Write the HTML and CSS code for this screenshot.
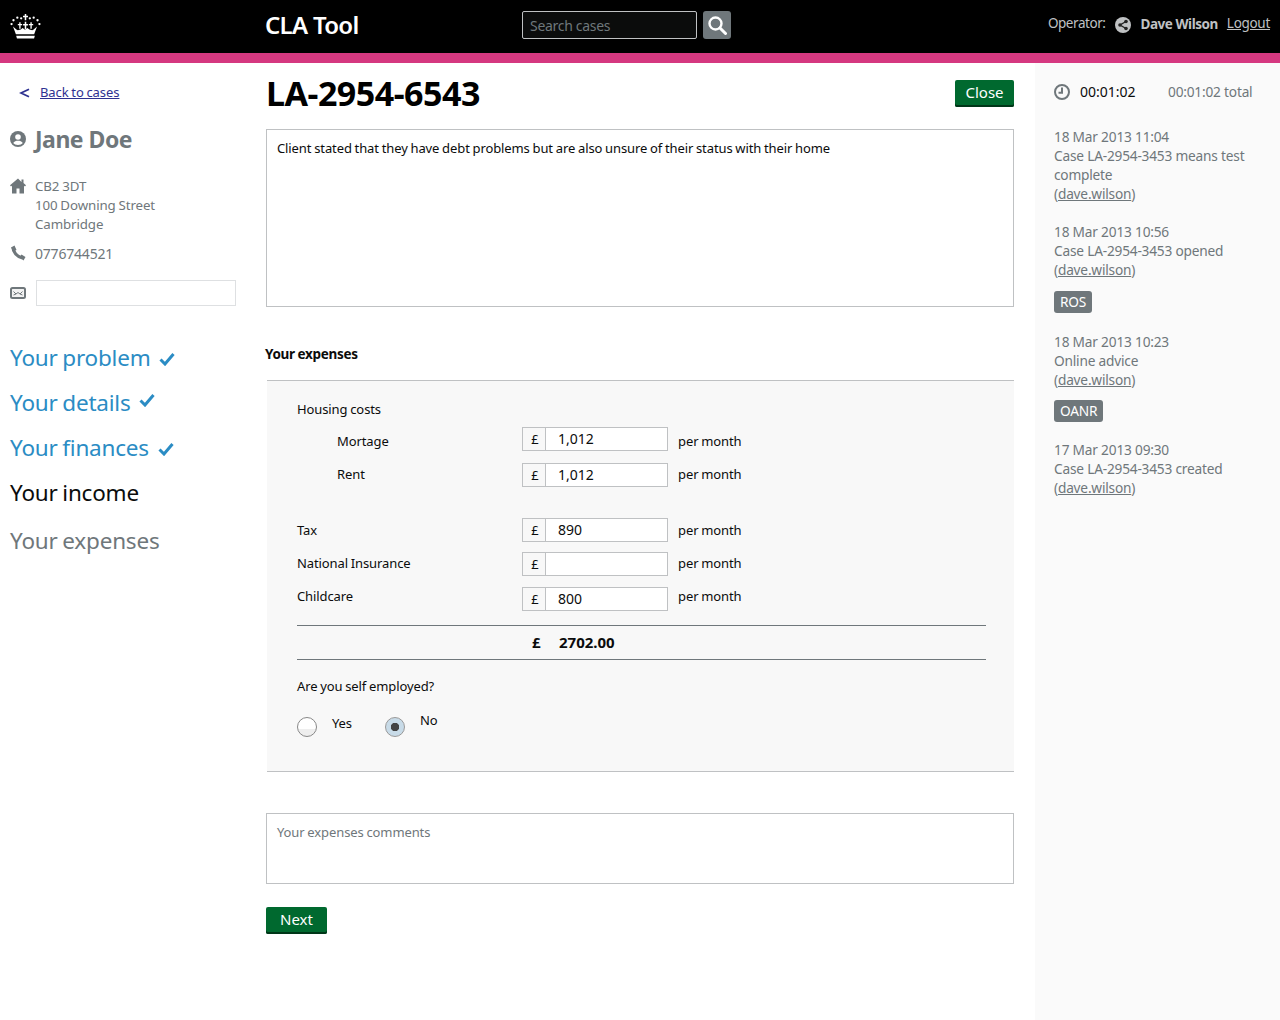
FILE: index.html
```html
<!DOCTYPE html>
<html lang="en">

<head>
    <meta charset="UTF-8">
    <meta name="viewport" content="width=device-width, initial-scale=1.0">
    <title>CLA Tool</title>
    <link rel="stylesheet" href="styles.css">
</head>

<body>
    <header class="topbar">
        <div class="crown-cell">
            <svg class="crown" viewBox="0 0 32 26" width="31" height="25" fill="#fff">
                <path d="M15.200 0h1.600v1.800h1.800v1.600h-1.800v3h-1.600v-3h-1.800V1.800h1.800z"/>
                <circle cx="11.500" cy="4.500" r="1.200"/><circle cx="20.500" cy="4.500" r="1.200"/>
                <circle cx="7.500" cy="3.800" r="1.200"/><circle cx="24.500" cy="3.800" r="1.200"/>
                <circle cx="3.500" cy="6.500" r="1.200"/><circle cx="28.500" cy="6.500" r="1.200"/>
                <circle cx="1.500" cy="10.500" r="1.200"/><circle cx="30.500" cy="10.500" r="1.200"/>
                <path d="M9.500 8.500h1.400v2h1.600v1.300h-1.600v3.500H9.500v-3.500H8v-1.300h1.500zM21.100 8.500h1.400v2H24v1.300h-1.500v3.500h-1.400v-3.500h-1.600v-1.300h1.600zM15.200 8h1.600v2.500h1.700v1.400h-1.700v4h-1.600v-4h-1.700v-1.400h1.700z"/>
                <path d="M3 13l3.500 3 1.500 1 3-1 2-1.500 2.500 2 2.500-2 2 1.500 3 1 1.500-1 3.500-3-3 8H6z"/>
                <path d="M6.300 22.500h19.400l-.8 3H7.100z"/>
            </svg>
        </div>
        <div class="brand">CLA Tool</div>
        <form class="search">
            <input class="search-input" type="text" placeholder="Search cases">
            <button class="search-btn" type="button" aria-label="Search">
                <svg viewBox="0 0 20 20" width="20" height="20" fill="none" stroke="#fff" stroke-width="2.400">
                    <circle cx="8.500" cy="8.500" r="6"/>
                    <path d="M13 13l5.500 5.500" stroke-linecap="round" stroke-width="3"/>
                </svg>
            </button>
        </form>
        <div class="operator">
            <span class="operator-label">Operator:</span>
            <svg class="globe" viewBox="0 0 16 16" width="16" height="16">
                <circle cx="8" cy="8" r="8" fill="#bfc1c3"/>
                <path d="M11 4.500L5 8l6 3.500" fill="none" stroke="#222" stroke-width="1.400"/>
                <circle cx="11" cy="4.500" r="1.800" fill="#222"/>
                <circle cx="5" cy="8" r="1.800" fill="#222"/>
                <circle cx="11" cy="11.500" r="1.800" fill="#222"/>
            </svg>
            <strong class="operator-name">Dave Wilson</strong>
            <a class="logout" href="#">Logout</a>
        </div>
    </header>
    <div class="stripe"></div>

    <div class="columns">
        <aside class="side">
            <a class="back" href="#">
                <svg class="back-arrow" viewBox="0 0 11 10" width="11" height="10"><path d="M10 1.200L2 5l8 3.800" fill="none" stroke="#2e3191" stroke-width="1.800"/></svg>
                <span class="back-link">Back to cases</span>
            </a>
            <h2 class="client">
                <svg viewBox="0 0 16 16" width="16" height="16">
                    <circle cx="8" cy="8" r="8" fill="#6f777b"/>
                    <circle cx="8" cy="6" r="2.800" fill="#fff"/>
                    <path d="M3.200 12c1-1.700 2.900-2.300 4.800-2.300s3.800.6 4.800 2.300c-1 1.200-2.800 2-4.800 2s-3.800-.8-4.800-2z" fill="#fff"/>
                </svg>
                Jane Doe
            </h2>
            <div class="contact address">
                <svg viewBox="0 0 16 16" width="16" height="16" fill="#6f777b">
                    <path d="M8 .5L0 7.200 1 8.500l1-.7V15.500h4.500V10.500h3v5H14V7.800l1 .7 1-1.300-2.500-2.100V1.500h-2v2.500z"/>
                </svg>
                <div>CB2 3DT<br>100 Downing Street<br>Cambridge</div>
            </div>
            <div class="contact phone">
                <svg viewBox="0 0 16 16" width="16" height="16">
                    <path d="M3 2.500c0 4.500 4 9.500 9.500 10.500" fill="none" stroke="#6f777b" stroke-width="3.200"/>
                    <path d="M1 2.500L4.500 .5 6.500 5 3.500 6.500zM9.500 12l2-2.500 4 2.500-2 3.500z" fill="#6f777b"/>
                </svg>
                <div class="phone-number">0776744521</div>
            </div>
            <div class="contact email">
                <svg viewBox="0 0 16 12" width="16" height="12">
                    <rect x="1" y="1" width="14" height="10" rx="1.500" fill="#f3f3f3" stroke="#6f777b" stroke-width="2"/>
                    <path d="M3.500 4.500L6 7l2-1.500L10 7l2.500-2.500M3.500 8L6 7M12.500 8L10 7" fill="none" stroke="#6f777b" stroke-width="1"/>
                </svg>
                <input class="email-input" type="text">
            </div>
            <nav class="steps">
                <a class="step done" href="#">Your problem <svg class="tick" viewBox="0 0 16 14" width="16" height="14"><path d="M1.500 7.500L6 12l8.500-10" fill="none" stroke="#2b8cc4" stroke-width="3"/></svg></a>
                <a class="step done" href="#">Your details <svg class="tick tick-high" viewBox="0 0 16 14" width="16" height="14"><path d="M1.500 7.500L6 12l8.500-10" fill="none" stroke="#2b8cc4" stroke-width="3"/></svg></a>
                <a class="step done" href="#">Your finances <svg class="tick" viewBox="0 0 16 14" width="16" height="14"><path d="M1.500 7.500L6 12l8.500-10" fill="none" stroke="#2b8cc4" stroke-width="3"/></svg></a>
                <span class="step current">Your income</span>
                <span class="step todo">Your expenses</span>
            </nav>
        </aside>

        <main class="main">
            <div class="case-head">
                <h1 class="case-ref">LA-2954-6543</h1>
                <button class="btn btn-close" type="button">Close</button>
            </div>
            <div class="note note-problem">Client stated that they have debt problems but are also unsure of their status with their home</div>

            <h3 class="section-title">Your expenses</h3>
            <section class="panel">
                <div class="group-title">Housing costs</div>

                <div class="row row-mortgage">
                    <label class="row-label indent">Mortage</label>
                    <div class="money"><span class="pound">£</span><span class="money-val">1,012</span></div>
                    <span class="per">per month</span>
                </div>
                <div class="row row-rent">
                    <label class="row-label indent">Rent</label>
                    <div class="money"><span class="pound">£</span><span class="money-val">1,012</span></div>
                    <span class="per">per month</span>
                </div>
                <div class="row row-tax">
                    <label class="row-label">Tax</label>
                    <div class="money"><span class="pound">£</span><span class="money-val">890</span></div>
                    <span class="per">per month</span>
                </div>
                <div class="row row-ni">
                    <label class="row-label">National Insurance</label>
                    <div class="money"><span class="pound">£</span><span class="money-val"></span></div>
                    <span class="per">per month</span>
                </div>
                <div class="row row-child">
                    <label class="row-label">Childcare</label>
                    <div class="money"><span class="pound">£</span><span class="money-val">800</span></div>
                    <span class="per">per month</span>
                </div>

                <div class="total">
                    <span class="total-pound">£</span>
                    <span>2702.00</span>
                </div>

                <div class="question">Are you self employed?</div>
                <div class="radios">
                    <span class="radio"></span>
                    <span class="radio-text yes">Yes</span>
                    <span class="radio on"></span>
                    <span class="radio-text no">No</span>
                </div>
            </section>

            <div class="note note-comments">Your expenses comments</div>
            <button class="btn btn-next" type="button">Next</button>
        </main>

        <aside class="log">
            <div class="timer">
                <svg viewBox="0 0 16 16" width="16" height="16" fill="none" stroke="#6f777b" stroke-width="2">
                    <circle cx="8" cy="8" r="7"/>
                    <path d="M8 3.500V8.800H4.500" stroke-width="2"/>
                </svg>
                <span class="timer-now">00:01:02</span>
                <span class="timer-total">00:01:02 total</span>
            </div>
            <div class="entry">18 Mar 2013 11:04<br>Case LA-2954-3453 means test complete<br>(<a href="#">dave.wilson</a>)</div>
            <div class="entry">18 Mar 2013 10:56<br>Case LA-2954-3453 opened<br>(<a href="#">dave.wilson</a>)</div>
            <span class="tag tag-ros">ROS</span>
            <div class="entry">18 Mar 2013 10:23<br>Online advice<br>(<a href="#">dave.wilson</a>)</div>
            <span class="tag tag-oanr">OANR</span>
            <div class="entry">17 Mar 2013 09:30<br>Case LA-2954-3453 created<br>(<a href="#">dave.wilson</a>)</div>
        </aside>
    </div>
</body>

</html>
```

FILE: styles.css
```css
body {
    font-family: "Noto Sans", Arial, sans-serif;
    font-size: 13px;
    line-height: 19px;
    letter-spacing: -0.1px;
    word-spacing: -0.5px;
    color: #0b0c0c;
    background-color: #fff;
    margin: 0;
    padding: 0;
}

/* top bar */
.topbar {
    display: flex;
    height: 53px;
    background-color: #000;
    color: #fff;
}

.crown-cell {
    width: 265px;
    padding: 14px 0 0 10px;
    box-sizing: border-box;
}

.crown {
    display: block;
}

.brand {
    width: 257px;
    font-size: 24px;
    font-weight: 600;
    line-height: 50px;
    letter-spacing: -0.7px;
    word-spacing: 0;
}

.search {
    display: flex;
    gap: 6px;
    padding-top: 11px;
}

.search-input {
    width: 175px;
    height: 28px;
    box-sizing: border-box;
    border: 1px solid #bfc1c3;
    border-radius: 2px;
    background-color: #0b0c0c;
    padding: 0 7px;
    font-family: inherit;
    font-size: 14px;
    letter-spacing: -0.3px;
    color: #fff;
}

.search-input::placeholder {
    color: #6f777b;
}

.search-btn {
    width: 28px;
    height: 28px;
    padding: 4px;
    border: none;
    border-radius: 3px;
    background-color: #6f777b;
}

.operator {
    display: flex;
    align-items: flex-start;
    margin-left: auto;
    padding: 14px 10px 0 0;
    font-size: 13.500px;
    letter-spacing: -0.45px;
    word-spacing: 0;
    white-space: nowrap;
    color: #bfc1c3;
}

.globe {
    margin: 3px 9px 0 10px;
}

.operator-name {
    margin: 1px 9px 0 0;
    font-weight: 700;
}

.logout {
    color: #bfc1c3;
    letter-spacing: -0.3px;
}

.stripe {
    height: 10px;
    background-color: #d53880;
}

/* columns */
.columns {
    display: flex;
    min-height: 957px;
}

.side {
    width: 266px;
    box-sizing: border-box;
    padding: 20px 0 0 10px;
    color: #6f777b;
}

.back {
    display: flex;
    align-items: center;
    color: #2e3191;
    margin-bottom: 21px;
}

.back-arrow {
    margin: 0 10px 0 9px;
}

.back-link {
    text-decoration: underline;
}

.client {
    display: flex;
    align-items: center;
    gap: 9px;
    margin: 0 0 22px;
    font-size: 23px;
    line-height: 32px;
    font-weight: 700;
    letter-spacing: -0.5px;
    word-spacing: 0;
}

.contact {
    display: flex;
    gap: 9px;
    font-size: 13.300px;
}

.address {
    margin-bottom: 10px;
}

.phone {
    margin-bottom: 17px;
}

.phone-number {
    font-size: 14px;
    letter-spacing: -0.2px;
}

.address svg, .phone svg {
    margin-top: 1px;
}

.email {
    align-items: center;
}

.email-input {
    width: 200px;
    height: 26px;
    box-sizing: border-box;
    margin-left: 1px;
    border: 1px solid #dee0e2;
    background-color: #fff;
}

.steps {
    display: flex;
    flex-direction: column;
    margin-top: 36px;
    font-size: 22.500px;
    line-height: 32px;
    letter-spacing: -0.2px;
    word-spacing: -1px;
}

.step {
    display: block;
    margin-bottom: 13px;
    text-decoration: none;
}

.done {
    color: #2b8cc4;
}

.current {
    color: #0b0c0c;
}

.todo {
    margin-top: 3px;
    color: #6f777b;
}

.tick {
    margin-left: 4px;
}

.tick-high {
    vertical-align: 4px;
}

/* main column */
.main {
    width: 748px;
    padding-top: 13px;
}

.case-head {
    display: flex;
    justify-content: space-between;
    align-items: flex-start;
    margin-bottom: 18px;
}

.case-ref {
    margin: 0;
    font-size: 34px;
    line-height: 35px;
    font-weight: 700;
    letter-spacing: -0.5px;
    color: #000;
}

.btn {
    height: 27px;
    margin-top: 4px;
    padding: 0 0 3px;
    border: none;
    border-radius: 2px;
    box-shadow: inset 0 -2px 0 #003618;
    background-color: #00692f;
    color: #fff;
    font-family: inherit;
    font-size: 15px;
}

.btn-close {
    width: 59px;
}

.btn-next {
    width: 61px;
}

.note {
    box-sizing: border-box;
    border: 1px solid #bfc1c3;
    padding: 9px 10px;
}

.note-problem {
    height: 178px;
}

.note-comments {
    height: 71px;
    margin: 41px 0 19px;
    color: #6f777b;
}

.section-title {
    margin: 37px 0 16px -1px;
    font-size: 13.500px;
    line-height: 20px;
    font-weight: 700;
    letter-spacing: -0.3px;
}

.panel {
    height: 392px;
    box-sizing: border-box;
    margin-left: 1px;
    padding: 19px 28px 0 30px;
    border-top: 1px solid #bfc1c3;
    border-bottom: 1px solid #bfc1c3;
    background-color: #f8f8f8;
}

.group-title {
    height: 27px;
}

.row {
    display: flex;
    height: 24px;
    align-items: flex-start;
}

.row-label {
    width: 225px;
}

.indent {
    padding-left: 40px;
    box-sizing: border-box;
}

.row-rent {
    margin-top: 12px;
}

.row-tax {
    margin-top: 31px;
}

.row-ni {
    margin-top: 10px;
}

.row-child {
    margin-top: 11px;
}

.row-mortgage .row-label, .row-mortgage .per {
    margin-top: 5px;
}

.row-rent .row-label, .row-rent .per, .row-ni .row-label, .row-ni .per {
    margin-top: 2px;
}

.row-tax .row-label, .row-tax .per {
    margin-top: 3px;
}

.row-child .row-label, .row-child .per {
    margin-top: 0;
}

.money {
    display: flex;
    width: 146px;
    height: 24px;
    box-sizing: border-box;
    border: 1px solid #bfc1c3;
    background-color: #fff;
    line-height: 22px;
}

.pound {
    width: 23px;
    box-sizing: border-box;
    padding-left: 2px;
    border-right: 1px solid #bfc1c3;
    background-color: #f8f8f8;
    text-align: center;
}

.money-val {
    padding-left: 12px;
    font-size: 14px;
    letter-spacing: 0;
}

.per {
    margin-left: 10px;
}

.total {
    display: flex;
    height: 33px;
    margin-top: 14px;
    border-top: 1px solid #6f777b;
    border-bottom: 1px solid #6f777b;
    font-size: 15px;
    font-weight: 700;
    letter-spacing: 0;
    line-height: 33px;
}

.total-pound {
    width: 262px;
    padding-left: 235px;
    box-sizing: border-box;
}

.question {
    margin-top: 17px;
}

.radios {
    display: flex;
    align-items: flex-start;
    margin-top: 21px;
}

.radio {
    width: 20px;
    height: 20px;
    box-sizing: border-box;
    border: 1px solid #888;
    border-radius: 50%;
    background: linear-gradient(#fff 60%, #eee 60%);
}

.radio.on {
    border-color: #999;
    background: radial-gradient(circle, #444 4px, #c8dbe8 4.500px);
}

.radio-text {
    margin-left: 15px;
}

.yes {
    width: 53px;
    margin-top: -3px;
}

.no {
    margin-top: -6px;
}

/* right column */
.log {
    width: 245px;
    margin-left: 21px;
    box-sizing: border-box;
    padding: 19px 20px 0 19px;
    background-color: #fafafa;
    color: #6f777b;
    font-size: 13.700px;
    letter-spacing: -0.2px;
    word-spacing: 0;
}

.timer {
    display: flex;
    align-items: center;
    margin-bottom: 26px;
}

.timer-now {
    width: 88px;
    margin-left: 10px;
    font-size: 14px;
    letter-spacing: 0;
    color: #0b0c0c;
}

.entry {
    margin-bottom: 19px;
}

.entry a {
    color: #6f777b;
}

.tag {
    display: block;
    width: fit-content;
    padding: 0 6px;
    height: 22px;
    line-height: 21px;
    border-radius: 3px;
    background-color: #6f777b;
    color: #fff;
}

.tag-ros {
    margin: -7px 0 19px;
}

.tag-oanr {
    margin: -8px 0 18px;
}
```
